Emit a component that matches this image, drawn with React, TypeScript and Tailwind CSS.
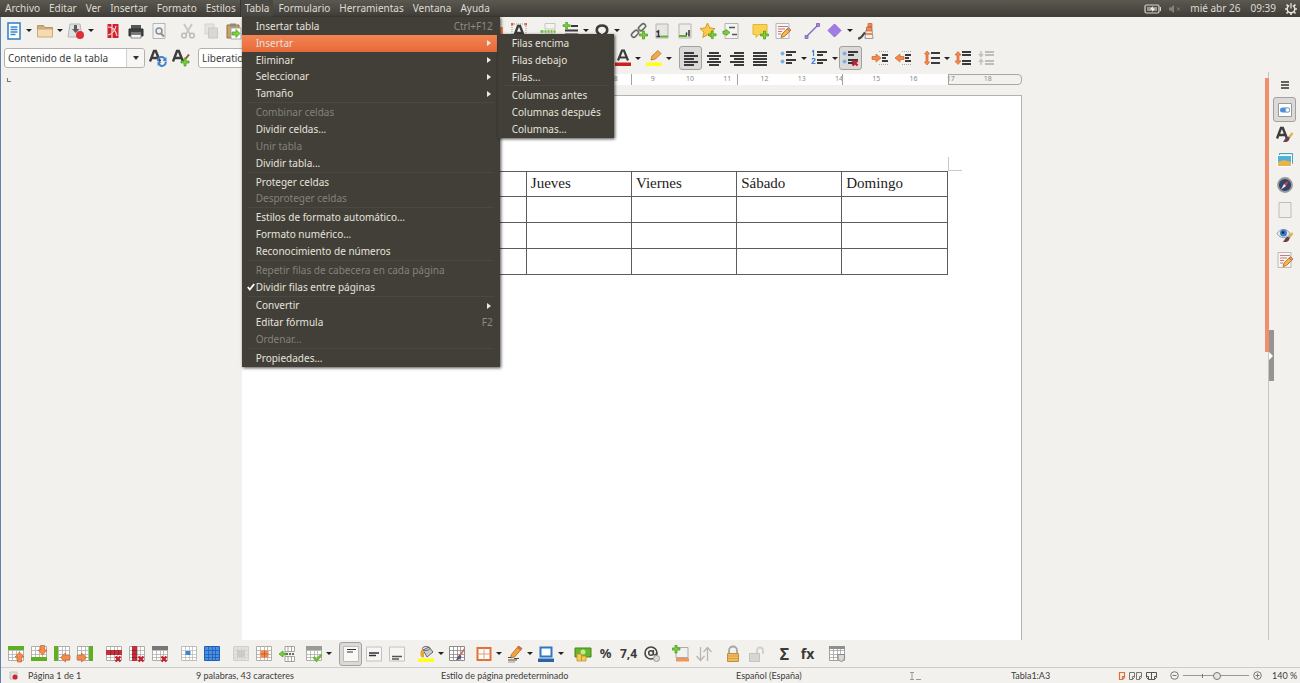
import React, { useState, ChangeEvent } from "react";

type MenuEntry = {
  label?: string;
  shortcut?: string;
  disabled?: boolean;
  arrow?: boolean;
  checked?: boolean;
  active?: boolean;
  separator?: boolean;
};

type Tool = {
  icon?: React.ReactNode;
  label?: string;
  caret?: boolean;
  gap?: string;
  active?: boolean;
};

const menuNames = [
  "Archivo", "Editar", "Ver", "Insertar", "Formato", "Estilos", "Tabla",
  "Formulario", "Herramientas", "Ventana", "Ayuda",
];

const tableMenu: MenuEntry[] = [
  { label: "Insertar tabla", shortcut: "Ctrl+F12" },
  { label: "Insertar", arrow: true, active: true },
  { label: "Eliminar", arrow: true },
  { label: "Seleccionar", arrow: true },
  { label: "Tamaño", arrow: true },
  { separator: true },
  { label: "Combinar celdas", disabled: true },
  { label: "Dividir celdas…" },
  { label: "Unir tabla", disabled: true },
  { label: "Dividir tabla..." },
  { separator: true },
  { label: "Proteger celdas" },
  { label: "Desproteger celdas", disabled: true },
  { separator: true },
  { label: "Estilos de formato automático…" },
  { label: "Formato numérico…" },
  { label: "Reconocimiento de números" },
  { separator: true },
  { label: "Repetir filas de cabecera en cada página", disabled: true },
  { label: "Dividir filas entre páginas", checked: true },
  { separator: true },
  { label: "Convertir", arrow: true },
  { label: "Editar fórmula", shortcut: "F2" },
  { label: "Ordenar...", disabled: true },
  { separator: true },
  { label: "Propiedades…" },
];

const insertMenu: MenuEntry[] = [
  { label: "Filas encima" },
  { label: "Filas debajo" },
  { label: "Filas..." },
  { separator: true },
  { label: "Columnas antes" },
  { label: "Columnas después" },
  { label: "Columnas…" },
];

// svg helpers
const Svg = ({ children }: { children: React.ReactNode }) => (
  <svg viewBox="0 0 18 18" className="h-[18px] w-[18px]" fill="none" aria-hidden="true">
    {children}
  </svg>
);

const Grid = ({ line = "#aeaeac", fill = "#fff" }: { line?: string; fill?: string }) => (
  <>
    <path d="M1.5 1.5h15v14h-15z" fill={fill} stroke={line} />
    <path d="M1.5 5.5h15M1.5 9.5h15M1.5 12.5h15M5.5 1.5v14M9.5 1.5v14M12.5 1.5v14" stroke={line} strokeWidth=".8" />
  </>
);

const Cross = () => (
  <path d="M10.5 11.5l5 5M15.5 11.5l-5 5" stroke="#c3202c" strokeWidth="2.4" />
);

const Plus = ({ at }: { at: string }) => (
  <g transform={at}>
    <path d="M3 0h2v3h3v2H5v3H3V5H0V3h3z" fill="#7ed03c" stroke="#3f9a12" strokeWidth=".7" />
  </g>
);

const Pencil = () => (
  <>
    <path d="M7 15.500l1-3.500 6-6 2.500 2.500-6 6z" fill="#f5b548" stroke="#a8641c" strokeWidth=".8" />
    <path d="M13 7l1.500-1.500L17 8l-1.500 1.500z" fill="#e58a8a" stroke="#a8641c" strokeWidth=".6" />
  </>
);

const Brush = () => (
  <>
    <path d="M16.500 7l-3 4" stroke="#e3b63a" strokeWidth="2.200" />
    <path d="M13.500 11l-1.500 1.500" stroke="#777" strokeWidth="2.200" />
    <path d="M12 11c-2.500 0-3 2.500-5 5 3.500.500 6-.500 6.500-3.500z" fill="#6d3a4e" />
  </>
);

const Lines = ({ d, color = "#3a3a3a" }: { d: string; color?: string }) => (
  <path d={d} stroke={color} strokeWidth="1.8" />
);

const LetterA = () => (
  <path d="M1 12.500L5 2h1.800L11 12.500M3 9h6.500" stroke="#3c3c3c" strokeWidth="2.400" />
);

const orange = { fill: "#f58a4b", stroke: "#d0602a", strokeWidth: 0.7 };

const icons = {
  doc: <Svg><path d="M3 1h12v16H3z" fill="#fff" stroke="#2f7dc4" strokeWidth="1.500" /><path d="M5.500 5h7M5.500 7.500h7M5.500 10h7M5.500 12.500h5" stroke="#3b86ca" strokeWidth="1.300" /></Svg>,
  folder: <Svg><path d="M1.500 14.500v-11h6l1.500 2h7.500v9z" fill="#d0b07a" stroke="#b59664" /><path d="M1.500 7h15v8h-15z" fill="#f3dcb0" stroke="#c9aa78" /></Svg>,
  save: <Svg><path d="M3 2h10l2 13H1z" fill="#dfe0e1" stroke="#b5b7b9" /><path d="M7 3h3v4h2.500L8.500 11 5 7h2z" fill="#5b5d5f" /><circle cx="13" cy="13" r="4" fill="#dc2f36" /></Svg>,
  pdf: <Svg><path d="M3.500 2h11v14h-11z" fill="#cf2430" /><path d="M4 5c5 0 8 4 9 9M12 4c-1 5-4 8-8 9M8 2v14" stroke="#f8dada" strokeWidth="1.200" /></Svg>,
  print: <Svg><path d="M4 3h10v5H4z" fill="#555" /><path d="M2 7h14v7H2z" fill="#3c4043" stroke="#2d3032" /><path d="M4 10h10v2H4z" fill="#777" /><path d="M4 12.500h10v3.500H4z" fill="#f5f5f5" stroke="#777" strokeWidth=".8" /></Svg>,
  preview: <Svg><path d="M3 1.500h12v15H3z" fill="#f3f3f3" stroke="#b5b5b5" /><circle cx="9" cy="9" r="3" fill="#e6eef2" stroke="#8a8f92" strokeWidth="1.500" /><path d="M11 11.500l3 3" stroke="#8a8f92" strokeWidth="2" /></Svg>,
  cut: <Svg><path d="M5 2l6 10M13 2L7 12" stroke="#c6c6c4" strokeWidth="1.800" /><circle cx="5" cy="13.500" r="2.300" stroke="#bcbcba" strokeWidth="1.600" /><circle cx="13" cy="13.500" r="2.300" stroke="#bcbcba" strokeWidth="1.600" /></Svg>,
  copy: <Svg><path d="M3 2h9v10H3z" fill="#e4e4e2" stroke="#d3d3d1" /><path d="M6.500 6h9v10h-9z" fill="#d8d8d6" stroke="#c9c9c7" /></Svg>,
  paste: <Svg><path d="M2 3h12v13H2z" fill="#c5a36a" stroke="#93713b" /><path d="M5 1.500h6v3H5z" fill="#8a8a8a" /><path d="M6 6h10v11H6z" fill="#fff" stroke="#999" strokeWidth=".8" /><path d="M7 10h4V7.500l4 4-4 4V13H7z" fill="#7ed03c" stroke="#3f9a12" strokeWidth=".7" /></Svg>,
  chart: <Svg><path d="M12 5h4v8h-4z" fill="#f58a4b" /></Svg>,
  textbox: <Svg><path d="M2 2h14v14H2z" stroke="#777" strokeWidth=".7" strokeDasharray="1 1" /><path d="M1 1h2.500v2.500H1zM14.500 1H17v2.500h-2.500z" fill="#cf6a60" /><path d="M4 14.500L8 4h2l4 10.500M6 11h6" stroke="#3c3c3c" strokeWidth="2.400" /></Svg>,
  pagebreak: <Svg><path d="M6 1.500h10v5.500H6z" fill="#f4f4f2" stroke="#bbb" strokeWidth=".8" /><path d="M1.500 9.500h3M5.500 9.500h2M8.500 9.500h2M11.500 9.500h2M14.500 9.500h2" stroke="#6dbb36" strokeWidth="2.600" /><path d="M6 12h10v4H6z" fill="#f4f4f2" stroke="#bbb" strokeWidth=".8" /></Svg>,
  field: <Svg><Lines d="M9 4h7M3 8.500h13M3 12.500h13" /><Plus at="translate(1 0) scale(.9)" /></Svg>,
  omega: <Svg><path d="M3 15h4v-2.500C2 10 3 3.500 9 3.500s7 6.500 2 9V15h4" stroke="#3c3c3c" strokeWidth="2.600" /></Svg>,
  link: <Svg><rect x="1" y="9.500" width="8" height="4.500" rx="2.200" transform="rotate(-45 5 11.700)" stroke="#6a6a6a" strokeWidth="1.600" /><rect x="8" y="3" width="8" height="4.500" rx="2.200" transform="rotate(-45 12 5.200)" stroke="#6a6a6a" strokeWidth="1.600" /><path d="M7 10l3-3" stroke="#8a8a8a" strokeWidth="1.600" /><Plus at="translate(9.500 9)" /></Svg>,
  footnote: <Svg><path d="M3 2h12v14H3z" fill="#e6e6e4" stroke="#b5b5b3" /><path d="M3.500 10l2-1v5M3.500 14.500h4" stroke="#333" strokeWidth="1.500" /><path d="M8 14.500h7" stroke="#5cb321" strokeWidth="1.800" /></Svg>,
  endnote: <Svg><path d="M3 2h12v14H3z" fill="#ececea" stroke="#b5b5b3" /><path d="M3 14h8" stroke="#5cb321" strokeWidth="2" /><path d="M13 8v6.500M10.500 10.500V13" stroke="#333" strokeWidth="1.500" /></Svg>,
  star: <Svg><path d="M8.500 1l2.200 5 5.300.500-4 3.700 1.200 5.300-4.700-2.800L3.800 15.500 5 10.200 1 6.500 6.300 6z" fill="#fbc94b" stroke="#d79a1c" /><Plus at="translate(9.500 9) scale(.95)" /></Svg>,
  crossref: <Svg><path d="M3 1.500h13v15H3z" fill="#f4f4f2" stroke="#b5b5b3" /><path d="M7 5.500h6M10 12.500h5" stroke="#555" strokeWidth="1.600" /><path d="M1 9h3V7.500l4 3-4 3V12H1z" fill="#7ed03c" stroke="#3f9a12" strokeWidth=".7" /></Svg>,
  comment: <Svg><path d="M2 2.500h14v10H8l-3 3v-3H2z" fill="#fbd24f" stroke="#e0b53c" /><Plus at="translate(9.500 9)" /></Svg>,
  changes: <Svg><path d="M2 1.500h13v15H2z" fill="#f6f6f4" stroke="#aaa" strokeWidth=".8" /><path d="M4 4.500h8M4 7h7M4 9.500h4M4 12h3" stroke="#d0757a" /><path d="M12 4.500h2" stroke="#6a9bd0" /><Pencil /></Svg>,
  line: <Svg><path d="M3 15L15 3" stroke="#7e62b8" strokeWidth="1.200" /><path d="M2 13.500h3v3H2zM13.500 1.500h3v3h-3z" fill="#a18ad8" stroke="#7a5fc0" strokeWidth=".8" /></Svg>,
  diamond: <Svg><path d="M8.500 2L15 8.500 8.500 15 2 8.500z" fill="#a07ce6" stroke="#8c6ad4" /></Svg>,
  draw: <Svg><path d="M9 8h6l1 8.500H8z" fill="#f2efec" stroke="#999" /><path d="M9.500 5h5.500v4H9.500zM11 1.500h4V5h-4z" fill="#f08a50" stroke="#b8603a" strokeWidth=".7" /><path d="M9 12h6.500" stroke="#f08a50" strokeWidth="2" /><path d="M1 16.500c4 0 4-3 7-6" stroke="#4a4a4a" strokeWidth="2.200" /></Svg>,

  updateStyle: <Svg><LetterA /><path d="M9 12a3.500 3.500 0 017-1M16.500 12.500a3.500 3.500 0 01-6.500 2.500" stroke="#3f82cf" strokeWidth="2" /><path d="M17.500 8v4h-4zM8.500 17v-4h4z" fill="#3f82cf" /></Svg>,
  newStyle: <Svg><LetterA /><path d="M17 5.500l-4 5" stroke="#8a5a2c" strokeWidth="2" /><Plus at="translate(9 9)" /></Svg>,
  fontColor: <Svg><path d="M4 11.500L8 1.500h2l4 10M6 8.500h6" stroke="#3c3c3c" strokeWidth="2.200" /><path d="M1 13.500h16V17H1z" fill="#c9211e" /></Svg>,
  highlight: <Svg><path d="M6 11l1-4 6-5.500 3 3L10.500 10z" fill="#f2a94b" stroke="#b97022" strokeWidth=".8" /><path d="M1 13.500h16V17H1z" fill="#ffff1c" /></Svg>,
  left: <Svg><Lines d="M2 4h10M2 7h14M2 10h10M2 13h14M2 16h10" /></Svg>,
  center: <Svg><Lines d="M4 4h10M2 7h14M4 10h10M2 13h14M4 16h10" /></Svg>,
  right: <Svg><Lines d="M6 4h10M2 7h14M6 10h10M2 13h14M6 16h10" /></Svg>,
  justify: <Svg><Lines d="M2 4h14M2 7h14M2 10h14M2 13h14M2 16h14" /></Svg>,
  bullets: <Svg><Lines d="M6 3h10M6 6h6M6 11h10M6 14h6" /><circle cx="2.500" cy="4.500" r="2" fill="#7fb0e0" /><circle cx="2.500" cy="12.500" r="2" fill="#7fb0e0" /></Svg>,
  numbers: <Svg><Lines d="M6 3h10M6 6h6M6 11h10M6 14h6" /><path d="M1 2.500l1.500-1V7M1 10.500c0-1.500 3-1.500 3 0 0 1.500-3 2.500-3 4h3.500" stroke="#3f82cf" strokeWidth="1.200" /></Svg>,
  noList: <Svg><Lines d="M6 3h10M6 6h6M6 11h10M6 14h6" /><circle cx="2.500" cy="4.500" r="2" fill="#7fb0e0" /><circle cx="2.500" cy="12.500" r="2" fill="#7fb0e0" /><Cross /></Svg>,
  indent: <Svg><Lines d="M11 6h6M11 9h4M11 12h6" /><path d="M8 2.500h9M8 15.500h9" stroke="#aaa" strokeDasharray="1 1" /><path d="M1 7.500h4V5l5 4-5 4v-2.500H1z" {...orange} /></Svg>,
  outdent: <Svg><Lines d="M11 6h6M11 9h4M11 12h6" /><path d="M8 2.500h9M8 15.500h9" stroke="#aaa" strokeDasharray="1 1" /><path d="M10 7.500H6V5L1 9l5 4v-2.500h4z" {...orange} /></Svg>,
  lineSpace: <Svg><Lines d="M8 4h9M8 9h9M8 14h9" /><path d="M4 2l2.500 3H5v8h1.500L4 16l-2.500-3H3V5H1.500z" {...orange} /></Svg>,
  paraMore: <Svg><Lines d="M8 3h9M8 6h9M8 12h9M8 15h9" /><path d="M4 2.500L7 6H5v6h2l-3 3.500L1 12h2V6H1z" {...orange} /></Svg>,
  paraLess: <Svg><Lines d="M8 3h9M8 6h9M8 12h9M8 15h9" color="#bdbdbb" /><path d="M4 2v4M4 16v-4M2 5l2 2.500L6 5M2 13l2-2.500L6 13" stroke="#c2c2c0" strokeWidth="1.500" /></Svg>,

  rowAbove: <Svg><Grid /><path d="M1 1h16v4H1z" fill="#5eb022" /><path d="M12.500 7l4.500 5h-2.500v5h-4v-5H8z" {...orange} /></Svg>,
  rowBelow: <Svg><Grid /><path d="M1 12h16v4H1z" fill="#5eb022" /><path d="M12.500 10L17 5h-2.500V.500h-4V5H8z" {...orange} /></Svg>,
  colBefore: <Svg><Grid /><path d="M1 1h4v15H1z" fill="#5eb022" /><path d="M7.500 12.500l5-4.500v2.500H17v4h-4.500V17z" {...orange} /></Svg>,
  colAfter: <Svg><Grid /><path d="M13 1h4v15h-4z" fill="#5eb022" /><path d="M10.500 12.500l-5-4.500v2.500H1v4h4.500V17z" {...orange} /></Svg>,
  delRow: <Svg><Grid /><path d="M1 5h16v5H1z" fill="#c3303c" /><path d="M5.500 5v5M9.500 5v5M13.500 5v5" stroke="#8e1a24" strokeWidth=".8" /><Cross /></Svg>,
  delCol: <Svg><Grid /><path d="M4 1h5v15H4z" fill="#c3303c" /><path d="M4 5.500h5M4 9h5M4 12.500h5" stroke="#8e1a24" strokeWidth=".8" /><Cross /></Svg>,
  delTable: <Svg><Grid /><path d="M1 1h16v4H1z" fill="#777" /><Cross /></Svg>,
  selCell: <Svg><Grid line="#bcbcba" /><path d="M5.500 6h5v4h-5z" fill="#3f82cf" /></Svg>,
  selTable: <Svg><Grid line="#1d5fb4" fill="#4a8fe0" /></Svg>,
  merge: <Svg><Grid line="#d0d0ce" fill="#e2e2e0" /><path d="M5 5h8v7H5z" fill="#cbcbc9" /></Svg>,
  splitCell: <Svg><Grid /><path d="M5.500 5.500h8v7h-8z" fill="#f58a4b" /><path d="M9.500 5.500v7M5.500 9h8" stroke="#d0602a" /></Svg>,
  splitTable: <Svg><path d="M7 1.500h9.500v5H7zM7 11.500h9.500v5H7zM10 1.500v5M13.500 1.500v5M10 11.500v5M13.500 11.500v5" fill="#fff" stroke="#999" strokeWidth=".9" /><path d="M8 9h9" stroke="#666" strokeWidth="2" strokeDasharray="2 1" /><path d="M8 8H5V6L1 9l4 3v-2h3z" fill="#7ed03c" stroke="#3f9a12" strokeWidth=".7" /></Svg>,
  autofmt: <Svg><Grid /><path d="M1 1h16v4H1z" fill="#9a9a98" /><path d="M8.500 12l3 3.500 5-6" stroke="#6dbb36" strokeWidth="2.600" /></Svg>,
  vTop: <Svg><path d="M1.500 1.500h15v15h-15z" fill="#f8f8f7" stroke="#bbb" /><path d="M5 4.500h9M5 7h6" stroke="#333" strokeWidth="1.200" /></Svg>,
  vMid: <Svg><path d="M1.500 2h15v14h-15z" fill="#f6f6f5" stroke="#c2c2c0" /><path d="M4 8h10M4 10.500h7" stroke="#333" strokeWidth="1.300" /></Svg>,
  vBot: <Svg><path d="M1.500 2h15v14h-15z" fill="#f6f6f5" stroke="#c2c2c0" /><path d="M4 11.500h10M4 14h7" stroke="#555" strokeWidth="1.300" /></Svg>,
  bucket: <Svg><path d="M1 13.500h16V17H1z" fill="#ffff1c" /><path d="M6 5l6-3 4 5-6 5z" fill="#c9cdd0" stroke="#666" /><path d="M5 4c-2 2-2 5-1 8l3 .500V6z" fill="#e8a33a" /><ellipse cx="9" cy="3.500" rx="3.500" ry="2" stroke="#666" /></Svg>,
  tblProps: <Svg><Grid line="#8a8a88" /><path d="M16.500 4l-5 7" stroke="#c9706a" strokeWidth="1.800" /><path d="M12 10c-2 0-2 2-4 5 3 0 5-1 5.500-3.500z" fill="#6a4a78" /></Svg>,
  borders: <Svg><path d="M2.500 3h13v12h-13z" fill="#fff" stroke="#e07038" strokeWidth="2" /><path d="M9 3v12M2.500 9h13" stroke="#e59a70" /></Svg>,
  borderStyle: <Svg><path d="M5 10l7.500-9 3.500 2.500L8.500 12 5 13z" fill="#f2a53a" stroke="#a8641c" strokeWidth=".8" /><path d="M12.500 1L16 3.500l-1.500 2L11 3z" fill="#d06a5a" /><path d="M2 12.500h3M8 13.500h5M2 15h9" stroke="#444" strokeWidth="1.200" /><path d="M2 17h7" stroke="#999" /></Svg>,
  borderColor: <Svg><path d="M3.500 2.500h11v9h-11z" fill="#fff" stroke="#2f76c4" strokeWidth="2" /><path d="M1 13.500h16V17H1z" fill="#2a63a8" /></Svg>,
  money: <Svg><path d="M1 3h16v9H1z" fill="#68b52e" stroke="#3f8a16" /><circle cx="9" cy="7" r="2.500" fill="#c8e89a" /><path d="M3 9h4.500v7H3zM7.500 11H12v5H7.500z" fill="#f4cd56" stroke="#c4952a" strokeWidth=".8" /></Svg>,
  at: <Svg><circle cx="8" cy="8" r="6" stroke="#444" strokeWidth="1.600" /><circle cx="8" cy="8" r="2.300" stroke="#444" strokeWidth="1.500" /><path d="M10.500 5v4.500c1.500 1 3 0 3-2" stroke="#444" strokeWidth="1.200" /><circle cx="13.500" cy="13.500" r="3" fill="#dadad8" stroke="#999" /></Svg>,
  caption: <Svg><path d="M4 2.500h12v10H4z" fill="#f2f2f1" stroke="#aaa" /><path d="M4 13h13v3.500H4z" fill="#f0945c" /><Plus at="translate(0 0)" /></Svg>,
  sort: <Svg><path d="M5.500 2v13M1.500 11l4 4.500 4-4.500M12.500 16V3M8.500 7l4-4.500 4 4.500" stroke="#b6b6b4" strokeWidth="1.300" /></Svg>,
  lock: <Svg><path d="M5 9V5.500a4 4 0 018 0V9" stroke="#a5a5a3" strokeWidth="1.800" /><path d="M3.500 8.500h11v8h-11z" fill="#f0b95a" stroke="#c09042" /><path d="M4 11h10M4 13.500h10" stroke="#d9a34c" /></Svg>,
  unlock: <Svg><path d="M10 9V5.500a3 3 0 016 0V9" stroke="#cfcfcd" strokeWidth="1.800" /><path d="M2.500 8.500h10v8h-10z" fill="#d6d6d4" stroke="#c3c3c1" /></Svg>,
  shieldTable: <Svg><Grid line="#a2a2a0" /><path d="M1 1h16v3H1z" fill="#8f8f8d" /><path d="M10 9.500h6.500v3.500c0 2-2 3-3.200 3.500C12 16 10 15 10 13z" fill="#d8d8d6" stroke="#888" /></Svg>,
  percent: <span className="text-[13px] font-bold text-[#3a3a3a]">%</span>,
  decimal: <span className="text-xs font-bold text-[#3a3a3a]">7,4</span>,
  sum: <span className="text-base font-bold text-[#3a3a3a]">Σ</span>,
  fx: <span className="text-sm font-bold text-[#3a3a3a]">fx</span>,

  toggle: <Svg><path d="M2.500 2.500h13v13h-13z" fill="#fff" stroke="#999" /><rect x="4" y="6.500" width="10" height="5" rx="2.500" fill="#4a8fe0" /><circle cx="11.500" cy="9" r="2.200" fill="#fff" stroke="#8ab" /></Svg>,
  styles: <Svg><LetterA /><Brush /></Svg>,
  gallery: <Svg><path d="M3.500 2.500h13v10h-13z" fill="#d8f0f4" stroke="#4aa3b5" /><path d="M1.500 4.500h14v11h-14z" fill="#4fb3d9" stroke="#fff" /><path d="M2 11l6-2 7 2v4H2z" fill="#e9b24a" /></Svg>,
  compass: <Svg><circle cx="9" cy="9" r="7" fill="#34466b" stroke="#9a9a98" strokeWidth="1.800" /><path d="M13 4.500L8 8l2 2z" fill="#e8432e" /><path d="M5 13.500L10 10 8 8z" fill="#f3f3f3" /></Svg>,
  blank: <Svg><path d="M3 1.500h12v15H3z" fill="#eeeeec" stroke="#bdbdbb" /></Svg>,
  inspect: <Svg><path d="M1 7.500C4 2 11 2 14 7.500c-3 5.500-10 5.500-13 0z" fill="#e3ecf4" stroke="#8aa0b0" /><circle cx="7.500" cy="7" r="3.500" fill="#3f7fc4" /><circle cx="7" cy="6.500" r="1.300" fill="#123" /><Brush /></Svg>,
};

const standardTools: Tool[] = [
  { icon: icons.doc, label: "Nuevo", caret: true },
  { icon: icons.folder, label: "Abrir", caret: true },
  { icon: icons.save, label: "Guardar", caret: true },
  { icon: icons.pdf, label: "Exportar", gap: "ml-1.5" },
  { icon: icons.print, label: "Imprimir" },
  { icon: icons.preview, label: "Vista previa" },
  { icon: icons.cut, label: "Cortar", gap: "ml-1.5" },
  { icon: icons.copy, label: "Copiar" },
  { icon: icons.paste, label: "Pegar" },
  { icon: icons.chart, label: "Gráfico", gap: "ml-[239px]" },
  { icon: icons.textbox, label: "Cuadro de texto" },
  { icon: icons.pagebreak, label: "Salto de página", gap: "ml-1.5" },
  { icon: icons.field, label: "Campo", caret: true },
  { icon: icons.omega, label: "Carácter especial", caret: true },
  { icon: icons.link, label: "Hiperenlace", gap: "ml-1.5" },
  { icon: icons.footnote, label: "Nota al pie" },
  { icon: icons.endnote, label: "Nota al final" },
  { icon: icons.star, label: "Marcador" },
  { icon: icons.crossref, label: "Referencia cruzada" },
  { icon: icons.comment, label: "Comentario", gap: "ml-1.5" },
  { icon: icons.changes, label: "Cambios" },
  { icon: icons.line, label: "Línea", gap: "ml-1.5" },
  { icon: icons.diamond, label: "Formas", caret: true },
  { icon: icons.draw, label: "Dibujo" },
];

const formatTools: Tool[] = [
  { icon: icons.fontColor, label: "Color de letra", caret: true },
  { icon: icons.highlight, label: "Resaltado", caret: true },
  { icon: icons.left, label: "Izquierda", gap: "ml-1.5", active: true },
  { icon: icons.center, label: "Centrar" },
  { icon: icons.right, label: "Derecha" },
  { icon: icons.justify, label: "Justificar" },
  { icon: icons.bullets, label: "Viñetas", gap: "ml-1.5", caret: true },
  { icon: icons.numbers, label: "Numeración", caret: true },
  { icon: icons.noList, label: "Sin lista", active: true },
  { icon: icons.indent, label: "Aumentar sangría", gap: "ml-1.5" },
  { icon: icons.outdent, label: "Reducir sangría" },
  { icon: icons.lineSpace, label: "Interlineado", gap: "ml-1.5", caret: true },
  { icon: icons.paraMore, label: "Aumentar espaciado" },
  { icon: icons.paraLess, label: "Reducir espaciado" },
];

const tableTools: Tool[] = [
  { icon: icons.rowAbove, label: "Fila encima" },
  { icon: icons.rowBelow, label: "Fila debajo" },
  { icon: icons.colBefore, label: "Columna antes" },
  { icon: icons.colAfter, label: "Columna después" },
  { icon: icons.delRow, label: "Eliminar fila", gap: "ml-1.5" },
  { icon: icons.delCol, label: "Eliminar columna" },
  { icon: icons.delTable, label: "Eliminar tabla" },
  { icon: icons.selCell, label: "Seleccionar celda", gap: "ml-1.5" },
  { icon: icons.selTable, label: "Seleccionar tabla" },
  { icon: icons.merge, label: "Combinar", gap: "ml-1.5" },
  { icon: icons.splitCell, label: "Dividir celda" },
  { icon: icons.splitTable, label: "Dividir tabla" },
  { icon: icons.autofmt, label: "Formato automático", gap: "ml-1", caret: true },
  { icon: icons.vTop, label: "Arriba", gap: "ml-1.5", active: true },
  { icon: icons.vMid, label: "Centro" },
  { icon: icons.vBot, label: "Abajo" },
  { icon: icons.bucket, label: "Fondo", gap: "ml-1.5", caret: true },
  { icon: icons.tblProps, label: "Estilos de tabla" },
  { icon: icons.borders, label: "Bordes", gap: "ml-1", caret: true },
  { icon: icons.borderStyle, label: "Estilo de borde", caret: true },
  { icon: icons.borderColor, label: "Color de borde", caret: true },
  { icon: icons.money, label: "Moneda", gap: "ml-1.5" },
  { icon: icons.percent, label: "Porcentaje" },
  { icon: icons.decimal, label: "Decimal" },
  { icon: icons.at, label: "Formato" },
  { icon: icons.caption, label: "Leyenda", gap: "ml-1.5" },
  { icon: icons.sort, label: "Ordenar" },
  { icon: icons.lock, label: "Proteger", gap: "ml-1.5" },
  { icon: icons.unlock, label: "Desproteger" },
  { icon: icons.sum, label: "Suma", gap: "ml-1.5" },
  { icon: icons.fx, label: "Fórmula" },
  { icon: icons.shieldTable, label: "Propiedades", gap: "ml-1.5" },
];

const sideTools: Tool[] = [
  { icon: icons.toggle, label: "Propiedades", active: true },
  { icon: icons.styles, label: "Estilos" },
  { icon: icons.gallery, label: "Galería" },
  { icon: icons.compass, label: "Navegador" },
  { icon: icons.blank, label: "Página" },
  { icon: icons.inspect, label: "Inspector" },
  { icon: icons.changes, label: "Gestionar cambios" },
];

const rulerNumbers = ["", "", "", "", "", "", "", "8", "9", "10", "11", "12", "13", "14", "15", "16", "17", "18"];

const weekDays = ["", "", "Jueves", "Viernes", "Sábado", "Domingo"];

const ToolBar = ({ tools }: { tools: Tool[] }) => (
  <>
    {tools.map((tool, i) => (
      <React.Fragment key={i}>
        <button
          type="button"
          aria-label={tool.label}
          className={`flex h-6 w-[23px] shrink-0 items-center justify-center rounded-[3px] ${tool.gap ?? ""} ${
            tool.active ? "border border-[#a3a19e] bg-[#dcdad8]" : ""
          }`}
        >
          <span className="flex shrink-0 items-center leading-none">{tool.icon}</span>
        </button>
        {tool.caret && (
          <span className="flex w-2 shrink-0 justify-center">
            <span className="border-x-[3px] border-t-[3px] border-x-transparent border-t-[#222]" />
          </span>
        )}
      </React.Fragment>
    ))}
  </>
);

const MenuList = ({ entries }: { entries: MenuEntry[] }) => (
  <>
    {entries.map((entry, i) =>
      entry.separator ? (
        <div key={i} className="mx-1.5 h-0.5 shrink-0 border-t border-[#4a4842]" />
      ) : (
        <button
          key={i}
          type="button"
          role="menuitem"
          disabled={entry.disabled}
          className={`relative mr-[3px] flex min-h-0 flex-1 items-center justify-between pr-1 pl-3.5 text-left ${
            entry.active ? "bg-linear-to-b from-[#f58453] to-[#e5683a]" : ""
          } ${entry.disabled ? "text-[#84827a]" : "text-[#e6e3dc]"}`}
        >
          {entry.checked && (
            <svg viewBox="0 0 8 8" className="absolute left-[5px] h-2 w-2" fill="none" aria-hidden="true">
              <path d="M.8 4l2 2.500L7.200 1" stroke="#fff" strokeWidth="1.800" />
            </svg>
          )}
          <span className="whitespace-nowrap">{entry.label}</span>
          {entry.shortcut && <span className="text-[#8d8b83]">{entry.shortcut}</span>}
          {entry.arrow && (
            <span className="mr-0.5 border-y-[3px] border-l-4 border-y-transparent border-l-[#eeebe4]" />
          )}
        </button>
      )
    )}
  </>
);

const App: React.FC = () => {
  const [zoom, setZoom] = useState(52);
  const [paragraphStyle, setParagraphStyle] = useState("Contenido de la tabla");
  const [fontName, setFontName] = useState("Liberation Serif");

  const handleZoomChange = (e: ChangeEvent<HTMLInputElement>) => {
    setZoom(Number(e.target.value));
  };

  return (
    <div className="flex h-screen flex-col overflow-hidden bg-[#f3f1ee] font-['Noto_Sans',sans-serif] text-[10px] text-[#3c3c3c]">
      {/* system bar */}
      <header className="relative z-20 flex h-[17px] shrink-0 items-center justify-between bg-linear-to-b from-[#5b5850] to-[#3f3d38] pr-0.5 text-[#dfdbd2]">
        <nav className="flex h-full">
          {menuNames.map((name) => (
            <div key={name} className="relative flex">
              <button
                type="button"
                className={`border-l px-1 ${name === "Tabla" ? "border-[#37352f] bg-[#4a4842]" : "border-transparent"}`}
              >
                {name}
              </button>
              {name === "Tabla" && (
                <div role="menu" className="absolute top-full left-0.5 flex h-[350px] w-[258px] flex-col bg-[#413f38] pt-px shadow-[1px_1px_3px_rgba(0,0,0,0.7)]">
                  <MenuList entries={tableMenu} />
                  <div role="menu" className="absolute top-[17px] left-64 flex h-[104px] w-[116px] flex-col bg-[#413f38] pt-px shadow-[1px_1px_3px_rgba(0,0,0,0.7)]">
                    <MenuList entries={insertMenu} />
                  </div>
                </div>
              )}
            </div>
          ))}
        </nav>
        <div className="flex items-center">
          <svg viewBox="0 0 18 10" className="mr-1.5 h-2.5 w-[18px]" fill="none" aria-hidden="true">
            <rect x="1" y="1" width="14" height="8" rx="1.500" stroke="#d8d4ca" strokeWidth="1.200" />
            <path d="M3 3h10v4H3z" fill="#9a978e" />
            <path d="M16.500 3v4" stroke="#d8d4ca" />
            <path d="M9 2L6 5.500h2.500L8 8l3-3.500H8.500z" fill="#fff" />
          </svg>
          <svg viewBox="0 0 14 10" className="mr-2 h-2.5 w-3.5" fill="none" aria-hidden="true">
            <path d="M1 3.500h2L6 1v8L3 6.500H1z" fill="#85827a" />
            <path d="M9 3.500l3 3M12 3.500l-3 3" stroke="#85827a" />
          </svg>
          <span className="mr-2.5">mié abr 26</span>
          <span className="mr-2">09:39</span>
          <svg viewBox="0 0 14 14" className="h-3.5 w-3.5" fill="none" aria-hidden="true">
            <circle cx="7" cy="7" r="3.800" stroke="#e4e0d8" strokeWidth="1.500" />
            <path d="M2.500 2.500l1.800 1.800M11.500 2.500L9.700 4.300M2.500 11.500l1.800-1.800M11.500 11.500L9.700 9.700M1 7h2.500M10.500 7H13M7 10.500V13" stroke="#e4e0d8" strokeWidth="1.700" />
            <path d="M7 1v5" stroke="#4f4d46" strokeWidth="3.400" />
            <path d="M7 1v5.500" stroke="#e4e0d8" strokeWidth="1.300" />
          </svg>
        </div>
      </header>

      <div className="flex min-h-0 flex-1 flex-col border-l border-[#5f83ad]">
        {/* standard bar */}
        <div className="flex h-[27px] shrink-0 items-center pl-px">
          <ToolBar tools={standardTools} />
        </div>

        {/* formatting bar */}
        <div className="flex h-7 shrink-0 items-center pl-[3px]">
          <div className="relative w-[141px] shrink-0">
            <select
              aria-label="Estilo de párrafo"
              value={paragraphStyle}
              onChange={(e) => setParagraphStyle(e.target.value)}
              className="h-5 w-full appearance-none rounded-[3px] border border-[#b5b2ae] bg-white pl-[3px]"
            >
              <option>Contenido de la tabla</option>
            </select>
            <span className="pointer-events-none absolute inset-y-px right-px flex w-[18px] items-center justify-center rounded-r-[3px] border-l border-[#d3d0cc] bg-[#f7f6f5]">
              <span className="border-x-[3px] border-t-4 border-x-transparent border-t-[#333]" />
            </span>
          </div>
          <div className="ml-px flex">
            <ToolBar
              tools={[
                { icon: icons.updateStyle, label: "Actualizar estilo" },
                { icon: icons.newStyle, label: "Estilo nuevo" },
              ]}
            />
          </div>
          <select
            aria-label="Nombre de letra"
            value={fontName}
            onChange={(e) => setFontName(e.target.value)}
            className="mr-[213px] ml-1.5 h-5 w-[200px] shrink-0 appearance-none rounded-[3px] border border-[#b5b2ae] bg-white pl-[3px]"
          >
            <option>Liberation Serif</option>
          </select>
          <ToolBar tools={formatTools} />
        </div>

        <div className="flex min-h-0 flex-1">
          {/* document */}
          <main className="flex min-w-0 flex-1 flex-col items-center overflow-hidden">
            <div className="relative flex h-[23px] w-full shrink-0 justify-center pt-0.5 pr-1.5">
              <span className="absolute top-1.5 left-1.5 h-1 w-1 border-b border-l border-[#777]" />
              <div className="relative flex h-[11px] w-[780px] text-[7px] text-[#8a8a88]">
                <div className="flex-1 bg-white" />
                <div className="w-[74px] rounded-r-sm border border-[#aaa8a4]" />
                <div className="absolute inset-y-0 left-[95px] grid w-[670px] grid-cols-18 items-center text-center">
                  {rulerNumbers.map((n, i) => (
                    <span key={i}>{n}</span>
                  ))}
                </div>
                <div className="absolute inset-y-0 left-[74px] grid w-[633px] grid-cols-6">
                  {weekDays.map((_, i) => (
                    <span key={i} className="border-r border-[#a5a3a0]" />
                  ))}
                </div>
              </div>
            </div>
            <div className="flex w-full flex-1 justify-center pr-1.5">
              <div className="w-[780px] border-t border-r border-[#b4b2ae] bg-white pt-[75px] pr-[73px] pl-[74px]">
                <div className="relative">
                  <span className="absolute -top-3.5 left-full h-3.5 w-3.5 border-b border-l border-[#c9c9c9]" />
                  <table className="w-full table-fixed border-collapse font-['Liberation_Serif',serif] text-[15px] leading-5 text-[#222]">
                    <thead>
                      <tr className="h-[25px]">
                        {weekDays.map((day, i) => (
                          <th key={i} className="border border-[#5c5c5c] px-1 pt-0 pb-0.5 text-left font-normal">{day}</th>
                        ))}
                      </tr>
                    </thead>
                    <tbody>
                      {[1, 2, 3].map((row) => (
                        <tr key={row} className="h-[26px]">
                          {weekDays.map((_, i) => (
                            <td key={i} className="border border-[#5c5c5c] p-0" />
                          ))}
                        </tr>
                      ))}
                    </tbody>
                  </table>
                </div>
              </div>
            </div>
          </main>

          {/* sidebar */}
          <aside className="relative flex w-8 shrink-0 flex-col items-center border-l border-[#c9c7c4]">
            <span className="absolute top-1.5 -left-1 h-[274px] w-1 bg-[#ef8f6b]" />
            <span className="absolute top-[258px] left-0 flex h-[51px] w-[5px] items-center bg-[#969490]">
              <span className="border-y-4 border-l-4 border-y-transparent border-l-white" />
            </span>
            <button type="button" aria-label="Configuración" className="flex h-[25px] items-center">
              <svg viewBox="0 0 8 8" className="h-2 w-2" fill="none" aria-hidden="true">
                <path d="M0 1h8M0 4h8M0 7h8" stroke="#333" strokeWidth="1.400" />
              </svg>
            </button>
            {sideTools.map((tool, i) => (
              <button
                key={i}
                type="button"
                aria-label={tool.label}
                className={`flex h-[25px] w-[23px] items-center justify-center rounded-[3px] ${
                  tool.active ? "border border-[#a3a19e] bg-[#dcdad8]" : ""
                }`}
              >
                {tool.icon}
              </button>
            ))}
          </aside>
        </div>

        {/* table bar */}
        <div className="flex h-[27px] shrink-0 items-center pl-[3px]">
          <ToolBar tools={tableTools} />
        </div>

        {/* status bar */}
        <footer className="flex h-4 shrink-0 items-center border-t border-[#cfcdca] pr-1 pl-2 font-['Lato',sans-serif] text-[9px]">
          <svg viewBox="0 0 10 10" className="mr-[9px] h-2.5 w-2.5" fill="none" aria-hidden="true">
            <path d="M1 1h7v7H1z" fill="#e2e2e0" stroke="#c2c2c0" />
            <circle cx="6" cy="6" r="2.500" fill="#cf2430" />
          </svg>
          <span className="w-[168px]">Página 1 de 1</span>
          <span className="w-[245px]">9 palabras, 43 caracteres</span>
          <span className="w-[295px]">Estilo de página predeterminado</span>
          <span className="w-[174px]">Español (España)</span>
          <span className="w-[101px]">
            <svg viewBox="0 0 12 10" className="h-2.5 w-3" fill="none" aria-hidden="true">
              <path d="M0 1.500h4M2 1.500v7M0 8.500h4M6 8.500h5" stroke="#999" />
            </svg>
          </span>
          <span className="flex-1">Tabla1:A3</span>
          <svg viewBox="0 0 40 10" className="mr-3 h-2.5 w-10" fill="none" aria-hidden="true">
            <path d="M1.500 1.500h5v5l-2 2h-3zM6.500 5.500h-2v3" stroke="#e07038" strokeWidth="1.200" />
            <path d="M11.500 1.500h5v5l-2 2h-3zM16.500 5.500h-2v3M18.500 1.500h5v5l-2 2h-3zM23.500 5.500h-2v3" stroke="#777" />
            <path d="M28.500 1.500h5v7h-3l-2-2zM28.500 5.500h2v3M33.500 1.500h5v5l-2 2h-3zM38.500 5.500h-2v3" stroke="#555" />
          </svg>
          <button type="button" aria-label="Alejar">
            <svg viewBox="0 0 9 9" className="h-[9px] w-[9px]" fill="none" stroke="#777" aria-hidden="true">
              <circle cx="4.500" cy="4.500" r="3.800" />
              <path d="M2.500 4.500h4" />
            </svg>
          </button>
          <div className="relative mx-1 flex w-[66px] items-center">
            <input
              type="range"
              aria-label="Escala"
              value={zoom}
              onChange={handleZoomChange}
              className="h-2 w-full appearance-none bg-[linear-gradient(#999,#999)] bg-[length:100%_1px] bg-center bg-no-repeat [&::-webkit-slider-thumb]:h-2 [&::-webkit-slider-thumb]:w-2 [&::-webkit-slider-thumb]:appearance-none [&::-webkit-slider-thumb]:rounded-full [&::-webkit-slider-thumb]:border [&::-webkit-slider-thumb]:border-[#777] [&::-webkit-slider-thumb]:bg-[#e8e6e3]"
            />
            <span className="pointer-events-none absolute left-[19px] h-1 w-px bg-[#777]" />
          </div>
          <button type="button" aria-label="Acercar">
            <svg viewBox="0 0 9 9" className="h-[9px] w-[9px]" fill="none" stroke="#777" aria-hidden="true">
              <circle cx="4.500" cy="4.500" r="3.800" />
              <path d="M2.500 4.500h4M4.500 2.500v4" />
            </svg>
          </button>
          <span className="ml-2.5 w-6 whitespace-nowrap">140 %</span>
        </footer>
      </div>
    </div>
  );
};

export default App;
